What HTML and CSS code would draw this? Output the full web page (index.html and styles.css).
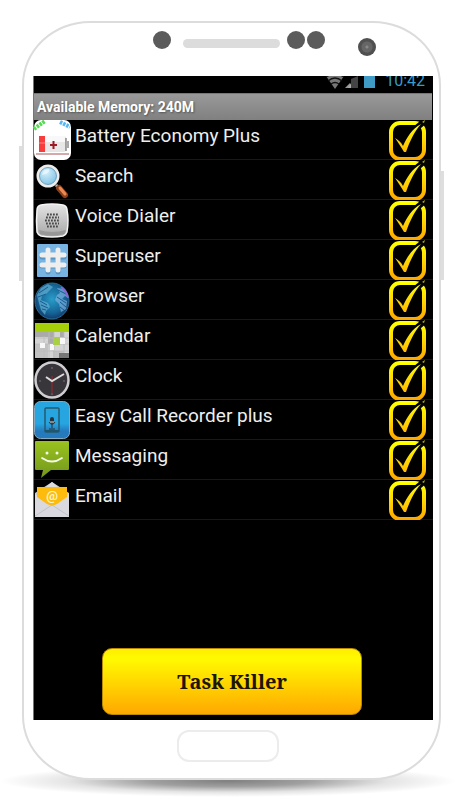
FILE: index.html
```html
<!DOCTYPE html>
<html lang="en">
<head>
    <meta charset="UTF-8">
    <meta name="viewport" content="width=device-width, initial-scale=1.0">
    <title>Task Killer</title>
    <link rel="stylesheet" href="styles.css">
</head>
<body>
    <!-- shared gradients and the check mark -->
    <svg class="defs" width="0" height="0" aria-hidden="true">
        <defs>
            <linearGradient id="gold" gradientUnits="userSpaceOnUse" x1="0" y1="0" x2="0" y2="40">
                <stop offset="0.1" stop-color="#ffff00"/>
                <stop offset="1" stop-color="#ffa800"/>
            </linearGradient>
            <linearGradient id="silver" x1="0" y1="0" x2="0" y2="1">
                <stop offset="0" stop-color="#e4e4e4"/>
                <stop offset="1" stop-color="#a6a6a6"/>
            </linearGradient>
            <radialGradient id="lens" cx="0.4" cy="0.3" r="0.8">
                <stop offset="0" stop-color="#d8f1fb"/>
                <stop offset="1" stop-color="#6db9e2"/>
            </radialGradient>
            <radialGradient id="globe" cx="0.5" cy="0.45" r="0.55">
                <stop offset="0" stop-color="#2a9cc8"/>
                <stop offset="0.7" stop-color="#156496"/>
                <stop offset="1" stop-color="#123a6b"/>
            </radialGradient>
            <linearGradient id="recorder" x1="0" y1="0" x2="0" y2="1">
                <stop offset="0.6" stop-color="#27a5e0"/>
                <stop offset="0.8" stop-color="#2579bd"/>
            </linearGradient>
            <linearGradient id="message" x1="0" y1="0" x2="0" y2="1">
                <stop offset="0" stop-color="#9ac21f"/>
                <stop offset="1" stop-color="#72981c"/>
            </linearGradient>
            <symbol id="tick" viewBox="0 0 38 40">
                <rect x="2" y="3" width="33" height="36" rx="9" fill="none" stroke="url(#gold)" stroke-width="4"/>
                <path d="M25 10L37 0" stroke="#000" stroke-width="6"/>
                <path d="M33 2L36 0L35 3Z" fill="#b5b000"/>
                <path d="M6 18C9 20 12 22 14 26C18 17 23 9 32 4C25 12 21 21 17 32H15C12 27 9 22 6 18Z" fill="url(#gold)"/>
            </symbol>
        </defs>
    </svg>

    <div class="phone">
        <div class="sensors">
            <span class="dot"></span>
            <span class="speaker"></span>
            <span class="dot"></span>
            <span class="dot"></span>
            <span class="dot camera"></span>
        </div>

        <main class="screen">
            <div class="status-bar">
                <svg width="50" height="13" viewBox="0 0 50 13" aria-hidden="true">
                    <path d="M0 0H18L9 13Z" fill="#777"/>
                    <path d="M0 1Q9 -5 18 1M2 5Q9 -1 16 5M5 8Q9 5 13 8" fill="none" stroke="#111" stroke-width="1.3"/>
                    <path d="M19 12L24 7V12Z" fill="#999"/>
                    <path d="M25 12V3L32 0V12Z" fill="#444"/>
                    <path d="M22 12L25 7V12Z" fill="#aaa"/>
                    <path d="M38 0H49V12H38Z" fill="#3f9bc6"/>
                </svg>
                <span class="time">10:42</span>
            </div>
            <h1 class="memory">Available Memory: 240M</h1>

            <ul class="tasks">
                <li>
                    <label class="task">
                        <svg class="icon" viewBox="0 0 38 40">
                            <rect x="1" y="0" width="37" height="40" rx="7" fill="#fff"/>
                            <path d="M1 9L12 1" stroke="#54dc50" stroke-width="4" stroke-dasharray="2.5 1"/>
                            <path d="M27 2L37 7" stroke="#54b7f3" stroke-width="4" stroke-dasharray="2.5 1"/>
                            <rect x="6" y="16" width="27" height="16" rx="2" fill="#e7e7e7"/>
                            <path d="M12 16H32V22H12Z" fill="#f8f8f8"/>
                            <rect x="6" y="16" width="6" height="16" fill="#f63c3c"/>
                            <path d="M6 23H12" stroke="#ff8080" stroke-width="1"/>
                            <path d="M33 18V31M35 21V28" stroke="#555" stroke-width="1"/>
                            <path d="M17 25H24M20.500 21V29" stroke="#a01820" stroke-width="2"/>
                            <path d="M3 34H36" stroke="#a55" stroke-width="1"/>
                        </svg>
                        <span class="name">Battery Economy Plus</span>
                        <span class="check"><input type="checkbox" checked><svg><use href="#tick"/></svg></span>
                    </label>
                </li>
                <li>
                    <label class="task">
                        <svg class="icon" viewBox="0 0 38 40">
                            <path d="M23 25L27 29" stroke="#bbb" stroke-width="3"/>
                            <path d="M26 28L32 35" stroke="#8d3f1c" stroke-width="6" stroke-linecap="round"/>
                            <path d="M27 28L32 34" stroke="#e98a55" stroke-width="3" stroke-linecap="round"/>
                            <circle cx="15" cy="16" r="10" fill="url(#lens)" stroke="#ececec" stroke-width="3"/>
                            <circle cx="15" cy="16" r="8.500" fill="none" stroke="#4b88a9" stroke-width="0.700"/>
                            <path d="M9 15Q10 9 16 9Q18 13 9 15" fill="#effaff" opacity="0.700"/>
                        </svg>
                        <span class="name">Search</span>
                        <span class="check"><input type="checkbox" checked><svg><use href="#tick"/></svg></span>
                    </label>
                </li>
                <li>
                    <label class="task">
                        <svg class="icon" viewBox="0 0 38 40">
                            <path d="M8 5Q19 3 30 5Q34 6 34 10Q36 20 34 32Q33 35 30 36Q19 38 8 36Q5 35 4 32Q3 20 4 10Q4 6 8 5Z" fill="url(#silver)" stroke="#f4f4f4" stroke-width="1.500"/>
                            <path d="M6 30Q19 34 33 30L31 34Q19 37 7 34Z" fill="#888" opacity="0.600"/>
                            <path d="M14 14.500H25M13 17.500H26M12 20.500H27M13 23.500H26M14 26.500H25" stroke="#4a4a4a" stroke-width="1.800" stroke-dasharray="1.800 1.200"/>
                        </svg>
                        <span class="name">Voice Dialer</span>
                        <span class="check"><input type="checkbox" checked><svg><use href="#tick"/></svg></span>
                    </label>
                </li>
                <li>
                    <label class="task">
                        <svg class="icon" viewBox="0 0 38 40">
                            <rect x="4" y="4" width="31" height="33" rx="1" fill="#78b4e3"/>
                            <path d="M15 11V32M25 11V32M9 17H31M9 26H31" stroke="#5b94c0" stroke-width="5" stroke-linecap="round"/>
                            <path d="M15 10V30M25 10V30M9 15H31M9 25H31" stroke="#eee" stroke-width="5" stroke-linecap="round"/>
                        </svg>
                        <span class="name">Superuser</span>
                        <span class="check"><input type="checkbox" checked><svg><use href="#tick"/></svg></span>
                    </label>
                </li>
                <li>
                    <label class="task">
                        <svg class="icon" viewBox="0 0 38 40">
                            <ellipse cx="19" cy="21" rx="17" ry="18" fill="url(#globe)" stroke="#2a6d96"/>
                            <path d="M4 15L8 8L15 4L20 7L16 11L13 14L9 16L8 20L15 23L17 27L13 31L12 35L8 30L6 23Z" fill="#68b4d6" opacity="0.650"/>
                            <path d="M24 8L31 9L35 18L32 16L29 19L34 21L33 29L28 32L26 24L22 20L24 15L27 13Z" fill="#82b5e3" opacity="0.650"/>
                            <path d="M6 13L15 7M5 17L13 14M7 21L14 25M8 25L15 28M9 29L13 30M25 10L33 14M24 17L33 23M27 22L33 27M27 27L31 30" stroke="#185b91" stroke-width="1"/>
                            <path d="M28 7Q34 11 35 18" fill="none" stroke="#8b63d3" stroke-width="2"/>
                        </svg>
                        <span class="name">Browser</span>
                        <span class="check"><input type="checkbox" checked><svg><use href="#tick"/></svg></span>
                    </label>
                </li>
                <li>
                    <label class="task">
                        <svg class="icon" viewBox="0 0 38 40">
                            <path d="M2 3H36V38H2Z" fill="#d4d4d4"/>
                            <path d="M2 3H36V12H2Z" fill="#a5cf08"/>
                            <path d="M2 12H15V17H2ZM15 12H21V24H15ZM27 12H31V17H27Z" fill="#aaa"/>
                            <path d="M2 24H15V38H2ZM20 31H31V38H20Z" fill="#c2c2c2"/>
                            <path d="M11 16V38M16 12V38M21 12V38M31 12V38M2 18H36M2 24H36M2 31H36" stroke="#bcbcbc" stroke-width="0.800"/>
                            <path d="M7 23H12V28H7ZM17 24H21V30H17ZM27 18H32V24H27Z" fill="#f8f8f8"/>
                            <path d="M20 17H27V25H20Z" fill="#a9cf45"/>
                            <path d="M26 33H36V38H26Z" fill="#777"/>
                        </svg>
                        <span class="name">Calendar</span>
                        <span class="check"><input type="checkbox" checked><svg><use href="#tick"/></svg></span>
                    </label>
                </li>
                <li>
                    <label class="task">
                        <svg class="icon" viewBox="0 0 38 40">
                            <ellipse cx="19" cy="20" rx="16.500" ry="17.500" fill="#38353b" stroke="#cfcdd1" stroke-width="2.500"/>
                            <path d="M19 7V9M19 33V35M6 21H8M30 21H32" stroke="#777" stroke-width="1"/>
                            <path d="M19 16V34" stroke="#a3272b" stroke-width="1"/>
                            <path d="M13 17L19 21L31 14" fill="none" stroke="#ddd" stroke-width="2"/>
                        </svg>
                        <span class="name">Clock</span>
                        <span class="check"><input type="checkbox" checked><svg><use href="#tick"/></svg></span>
                    </label>
                </li>
                <li>
                    <label class="task">
                        <svg class="icon" viewBox="0 0 38 40">
                            <rect x="1.500" y="1.500" width="35" height="37" rx="6" fill="url(#recorder)" stroke="#88a9bb" stroke-width="1"/>
                            <rect x="12" y="8" width="14" height="24" rx="1" fill="none" stroke="#235a70" stroke-width="1.500"/>
                            <path d="M12 30H26V32H12Z" fill="#20566c"/>
                            <rect x="17" y="17" width="4" height="7" rx="2" fill="#28333c"/>
                            <path d="M16 22Q19 27 22 22M19 25V28M16 29H22" stroke="#28333c" stroke-width="1" fill="none"/>
                            <path d="M17 22H21" stroke="#ddd" stroke-width="1"/>
                        </svg>
                        <span class="name">Easy Call Recorder plus</span>
                        <span class="check"><input type="checkbox" checked><svg><use href="#tick"/></svg></span>
                    </label>
                </li>
                <li>
                    <label class="task">
                        <svg class="icon" viewBox="0 0 38 40">
                            <path d="M3 1H35Q36 1 36 2V29Q36 30 35 30H18L8 38L10 30H3Q2 30 2 29V2Q2 1 3 1Z" fill="url(#message)"/>
                            <circle cx="14" cy="13" r="1.500" fill="#f4f8e8"/>
                            <circle cx="24" cy="13" r="1.500" fill="#f4f8e8"/>
                            <path d="M9 18Q19 25 29 18" fill="none" stroke="#f4f8e8" stroke-width="1.800" stroke-linecap="round"/>
                        </svg>
                        <span class="name">Messaging</span>
                        <span class="check"><input type="checkbox" checked><svg><use href="#tick"/></svg></span>
                    </label>
                </li>
                <li>
                    <label class="task">
                        <svg class="icon" viewBox="0 0 38 40">
                            <path d="M2 13L19 2L36 13V37H2Z" fill="#c9c9cf"/>
                            <path d="M13 7L19 2L25 7Z" fill="#ddd"/>
                            <path d="M2 14L19 25L36 14V37H2Z" fill="#d9d9df"/>
                            <path d="M4 7H34V17L24 24L19 26L14 24L4 17Z" fill="#fcbb0d"/>
                            <path d="M2 36L19 25L36 36" fill="none" stroke="#c2c2ca" stroke-width="1"/>
                            <text class="at" x="19" y="20" text-anchor="middle">@</text>
                        </svg>
                        <span class="name">Email</span>
                        <span class="check"><input type="checkbox" checked><svg><use href="#tick"/></svg></span>
                    </label>
                </li>
            </ul>

            <button type="button" class="kill">Task Killer</button>
        </main>

        <div class="bottom"><span class="home"></span></div>
    </div>
    <div class="shadow"></div>
</body>
</html>
```

FILE: styles.css
```css
* {
    box-sizing: border-box;
}
body {
    margin: 0;
    padding-top: 21px;
    background: #fff;
    font-family: Roboto, "Liberation Sans", sans-serif;
    overflow-x: hidden;
}
.defs {
    position: absolute;
}

/* phone case */
.phone {
    position: relative;
    z-index: 1;
    margin: 0 15px 0 22px;
    padding: 0 6px 0 9px;
    border: 2px solid #dcdcdc;
    border-radius: 68px / 64px;
    background: #fff;
}
.phone::before,
.phone::after {
    content: "";
    position: absolute;
    width: 3px;
    background: #dedede;
}
.phone::before {
    left: -5px;
    top: 123px;
    height: 135px;
}
.phone::after {
    right: -5px;
    top: 148px;
    height: 109px;
}
.sensors {
    display: flex;
    align-items: center;
    height: 53px;
    padding: 0 0 20px 120px;
}
.dot {
    width: 18px;
    height: 18px;
    margin-right: 2px;
    border-radius: 50%;
    background: #5b5b5b;
}
.speaker {
    width: 97px;
    height: 9px;
    margin: 8px 7px 0 10px;
    border-radius: 5px;
    background: #dcdcdc;
}
.camera {
    margin: 14px 0 0 31px;
    background: radial-gradient(circle, #888 0 1px, #666 2px 5px, #505050 6px);
}
.bottom {
    padding: 10px 10px 16px 0;
}
.home {
    display: block;
    width: 102px;
    height: 32px;
    margin: 0 auto;
    border: 2px solid #ececec;
    border-radius: 12px;
}
.shadow {
    height: 32px;
    margin-top: -15px;
    background: radial-gradient(closest-side, #808080 0%, #a0a0a0 35%, #e4e4e4 70%, #fff 100%);
}

/* screen */
.screen {
    display: flex;
    flex-direction: column;
    padding-bottom: 5px;
    border-left: 1px solid #6f803f;
    background: #000;
}
.status-bar {
    display: flex;
    justify-content: flex-end;
    align-items: flex-start;
    height: 17px;
    padding-right: 8px;
    overflow: hidden;
}
.time {
    margin-left: 9px;
    margin-top: -4px;
    color: #339fc9;
    font-size: 16px;
    line-height: 18px;
}
.memory {
    height: 27px;
    margin: 0 1px 0 0;
    padding-left: 3px;
    border-top: 1px solid #777;
    background: linear-gradient(#999, #808080);
    color: #fff;
    font-size: 14px;
    font-weight: 700;
    line-height: 26px;
    text-shadow: 1px 1px 2px #555;
}
.tasks {
    margin: 0;
    padding: 0;
    list-style: none;
}
.task {
    display: flex;
    height: 40px;
    border-bottom: 1px solid #181818;
}
.icon {
    width: 38px;
    height: 40px;
    margin-left: -1px;
}
.name {
    flex: 1;
    padding-left: 4px;
    color: #eee;
    font-size: 19px;
    line-height: 32px;
}
.at {
    fill: #fff3c4;
    font-size: 13px;
    font-weight: 700;
}
.check {
    display: grid;
    width: 38px;
    height: 40px;
    margin-right: 6px;
}
.check input,
.check svg {
    grid-area: 1 / 1;
    width: 38px;
    height: 40px;
    margin: 0;
}
.check input {
    appearance: none;
}
.check svg {
    pointer-events: none;
}
.check input:not(:checked) + svg {
    opacity: 0.3;
}
.kill {
    height: 67px;
    margin: 128px 71px 0 68px;
    border: 1px solid #b98a00;
    border-radius: 10px;
    background: linear-gradient(#ffee00, #fffa00 15%, #ffa800);
    color: #1c1500;
    font-family: "Noto Serif", "DejaVu Serif Condensed", "DejaVu Serif", serif;
    font-size: 20px;
    font-weight: 700;
    cursor: pointer;
}
```
